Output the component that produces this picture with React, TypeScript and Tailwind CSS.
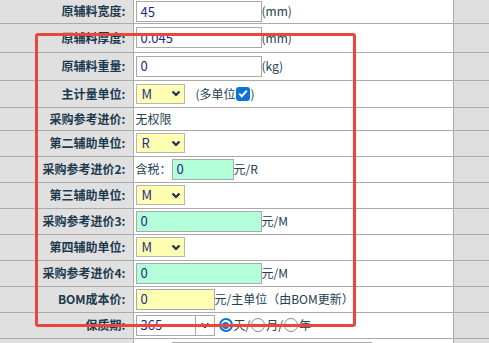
import type { ReactNode } from "react";

function Chevron() {
  return (
    <svg width="10" height="7" viewBox="0 0 10 7" aria-hidden="true">
      <polyline points="1.5,1.5 5,5 8.5,1.5" fill="none" stroke="#1c2f5a" strokeWidth="2.2" />
    </svg>
  );
}

function Field({ value, className }: { value: string; className: string }) {
  return (
    <div className={`h-[21px] border border-[#a9a9a9] flex items-center pl-[4px] text-[13px] text-[#1f1f8a] ${className}`}>
      {value}
    </div>
  );
}

function Select({ value }: { value: string }) {
  return (
    <div className="w-[49px] h-[20px] bg-[#ffffb3] border border-[#b5b5b5] flex items-center justify-between pl-[5px] pr-[3px] text-[13px] text-[#2b2b8c]">
      <span>{value}</span>
      <Chevron />
    </div>
  );
}

function Radio({ checked }: { checked?: boolean }) {
  return checked ? (
    <span className="w-[14px] h-[14px] rounded-full bg-[#0b74da] flex items-center justify-center">
      <span className="w-[10px] h-[10px] rounded-full bg-white flex items-center justify-center">
        <span className="w-[7px] h-[7px] rounded-full bg-[#0b74da]" />
      </span>
    </span>
  ) : (
    <span className="w-[14px] h-[14px] rounded-full border border-[#8a8a8a] bg-white" />
  );
}

type Row = { label: string; h: string; value: ReactNode };

const rows: Row[] = [
  {
    label: "原辅料宽度:",
    h: "h-[23px]",
    value: (
      <>
        <Field value="45" className="w-[126px] bg-white" />
        <span>(mm)</span>
      </>
    ),
  },
  {
    label: "原辅料厚度:",
    h: "h-[29px]",
    value: (
      <>
        <Field value="0.045" className="w-[126px] bg-white" />
        <span>(mm)</span>
      </>
    ),
  },
  {
    label: "原辅料重量:",
    h: "h-[28px]",
    value: (
      <>
        <Field value="0" className="w-[126px] bg-white" />
        <span>(kg)</span>
      </>
    ),
  },
  {
    label: "主计量单位:",
    h: "h-[27px]",
    value: (
      <>
        <Select value="M" />
        <span className="ml-[11px]">(多单位</span>
        <span className="w-[14px] h-[14px] rounded-[3px] bg-[#0b74da] flex items-center justify-center">
          <svg width="10" height="9" viewBox="0 0 10 9" aria-hidden="true">
            <polyline points="1.2,4.6 3.8,7.2 8.8,1.6" fill="none" stroke="#fff" strokeWidth="2" />
          </svg>
        </span>
        <span className="ml-[1px]">)</span>
      </>
    ),
  },
  { label: "采购参考进价:", h: "h-[23px]", value: <span>无权限</span> },
  { label: "第二辅助单位:", h: "h-[26px]", value: <Select value="R" /> },
  {
    label: "采购参考进价2:",
    h: "h-[26px]",
    value: (
      <>
        <span>含税：</span>
        <Field value="0" className="w-[62px] bg-[#b3ffd9]" />
        <span>元/R</span>
      </>
    ),
  },
  { label: "第三辅助单位:", h: "h-[26px]", value: <Select value="M" /> },
  {
    label: "采购参考进价3:",
    h: "h-[26px]",
    value: (
      <>
        <Field value="0" className="w-[126px] bg-[#b3ffd9]" />
        <span>元/M</span>
      </>
    ),
  },
  { label: "第四辅助单位:", h: "h-[26px]", value: <Select value="M" /> },
  {
    label: "采购参考进价4:",
    h: "h-[26px]",
    value: (
      <>
        <Field value="0" className="w-[126px] bg-[#b3ffd9]" />
        <span>元/M</span>
      </>
    ),
  },
  {
    label: "BOM成本价:",
    h: "h-[26px]",
    value: (
      <>
        <Field value="0" className="w-[79px] bg-[#ffffb3]" />
        <span>元/主单位（由BOM更新）</span>
      </>
    ),
  },
  {
    label: "保质期:",
    h: "h-[26px]",
    value: (
      <>
        <div className="w-[79px] h-[21px] border border-[#a9a9a9] flex text-[13px] text-[#1f1f8a]">
          <span className="flex-1 pl-[4px] flex items-center border-r border-[#a9a9a9]">365</span>
          <span className="w-[18px] flex items-center justify-center">
            <Chevron />
          </span>
        </div>
        <span className="ml-[4px] flex items-center gap-[1px]">
          <Radio checked />
          <span>天/</span>
          <Radio />
          <span>月/</span>
          <Radio />
          <span>年</span>
        </span>
      </>
    ),
  },
  {
    label: "",
    h: "h-[20px]",
    value: <div className="ml-[36px] mt-[3px] w-[200px] h-[21px] border border-[#a9a9a9] self-start" />,
  },
];

export default function App() {
  return (
    <div className="relative w-[489px] h-[343px] overflow-hidden bg-white font-['Noto_Sans_CJK_SC',sans-serif] text-[12px] text-[#24404f]">
      <table className="w-[489px] border-collapse table-fixed">
        <colgroup>
          <col className="w-[133px]" />
          <col className="w-[320px]" />
          <col />
        </colgroup>
        <tbody>
          {rows.map((r, i) => (
            <tr key={i} className={r.h}>
              <td className={`${r.h} p-0 pr-[7px] bg-[#e0e0e0] border border-l-0 border-[#ababab] text-right font-bold text-[#1c3a4d] ${i === 0 ? "border-t-0" : ""}`}>
                {r.label}
              </td>
              <td className={`${r.h} p-0 pl-[2px] bg-white border border-[#ababab] ${i === 0 ? "border-t-0" : ""}`}>
                <div className="flex items-center h-full">{r.value}</div>
              </td>
              <td className={`${r.h} p-0 bg-[#dedede] border border-r-0 border-[#ababab] ${i === 0 ? "border-t-0" : ""}`} />
            </tr>
          ))}
        </tbody>
      </table>
      <div className="absolute left-[35px] top-[33px] w-[321px] h-[294px] border-[3px] border-[#e9473d] rounded-[3px]" />
    </div>
  );
}
